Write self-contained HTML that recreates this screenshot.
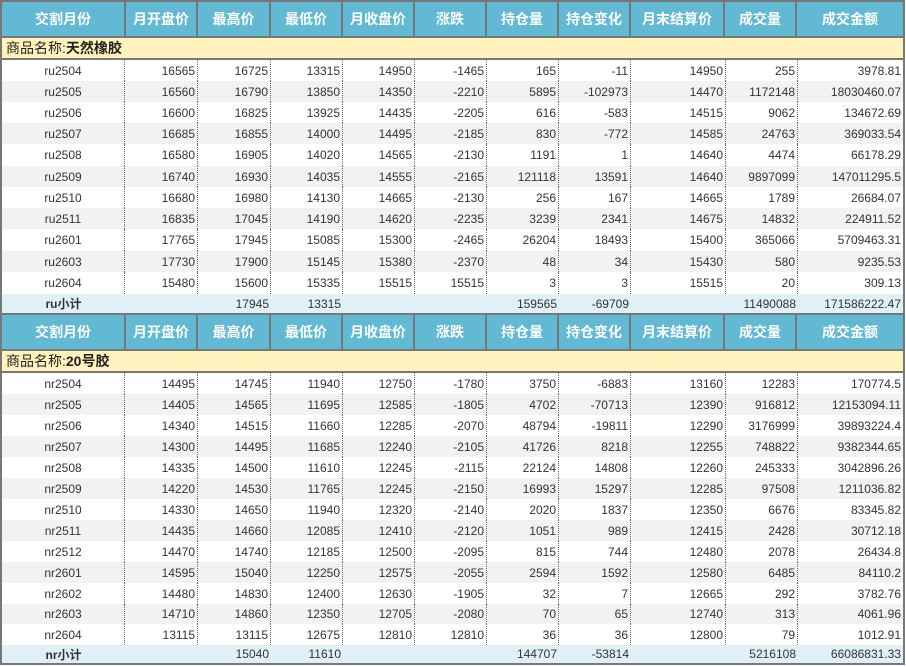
<!DOCTYPE html>
<html><head><meta charset="utf-8"><style>
*{margin:0;padding:0;box-sizing:border-box}
body{width:906px;height:667px;background:#fff;font-family:"Liberation Sans","Noto Sans CJK SC",sans-serif;position:relative;overflow:hidden;color:#333}
.hd{position:absolute;left:0;width:905px;background:#62b9d3;border:2px solid #777;display:flex}
.hd div{color:#fff;font-weight:bold;font-size:14px;display:flex;align-items:center;justify-content:center;border-right:2px solid #777;height:100%}
.hd div:last-child{border-right:none}
.nm{position:absolute;left:0;width:905px;background:#fff2bd;border-left:2px solid #777;border-right:2px solid #777;border-bottom:2px solid #777;font-size:14px;padding-left:4px;display:flex;align-items:center;color:#222}
.r{position:absolute;left:0;width:905px;display:flex;font-size:12px;border-left:2px solid #777;border-right:2px solid #777}
.r div{display:flex;align-items:center;justify-content:flex-end;padding-right:2px;border-right:1px dotted #666;height:100%}
.r div:first-child{justify-content:center;padding:0}
.r div:last-child{border-right:none}
.r.a{background:#f2f2f2}
.r.s{background:#dff0f7}
.r.s div{border-right:none}
.r.s div:first-child{font-weight:bold}
</style></head><body>
<div class="hd" style="top:0;height:38px"><div style="width:124px">交割月份</div><div style="width:72px">月开盘价</div><div style="width:73px">最高价</div><div style="width:72px">最低价</div><div style="width:72px">月收盘价</div><div style="width:72px">涨跌</div><div style="width:72px">持仓量</div><div style="width:72px">持仓变化</div><div style="width:94px">月末结算价</div><div style="width:72px">成交量</div><div style="width:106px">成交金额</div></div>
<div class="nm" style="top:38px;height:22px">商品名称:<b>天然橡胶</b></div>

<div class="r" style="top:60px;height:21px"><div style="width:123px">ru2504</div><div style="width:73px">16565</div><div style="width:73px">16725</div><div style="width:72px">13315</div><div style="width:72px">14950</div><div style="width:72px">-1465</div><div style="width:72px">165</div><div style="width:72px">-11</div><div style="width:95px">14950</div><div style="width:72px">255</div><div style="width:105px">3978.81</div></div>
<div class="r a" style="top:81px;height:21px"><div style="width:123px">ru2505</div><div style="width:73px">16560</div><div style="width:73px">16790</div><div style="width:72px">13850</div><div style="width:72px">14350</div><div style="width:72px">-2210</div><div style="width:72px">5895</div><div style="width:72px">-102973</div><div style="width:95px">14470</div><div style="width:72px">1172148</div><div style="width:105px">18030460.07</div></div>
<div class="r" style="top:102px;height:21px"><div style="width:123px">ru2506</div><div style="width:73px">16600</div><div style="width:73px">16825</div><div style="width:72px">13925</div><div style="width:72px">14435</div><div style="width:72px">-2205</div><div style="width:72px">616</div><div style="width:72px">-583</div><div style="width:95px">14515</div><div style="width:72px">9062</div><div style="width:105px">134672.69</div></div>
<div class="r a" style="top:123px;height:21px"><div style="width:123px">ru2507</div><div style="width:73px">16685</div><div style="width:73px">16855</div><div style="width:72px">14000</div><div style="width:72px">14495</div><div style="width:72px">-2185</div><div style="width:72px">830</div><div style="width:72px">-772</div><div style="width:95px">14585</div><div style="width:72px">24763</div><div style="width:105px">369033.54</div></div>
<div class="r" style="top:144px;height:22px"><div style="width:123px">ru2508</div><div style="width:73px">16580</div><div style="width:73px">16905</div><div style="width:72px">14020</div><div style="width:72px">14565</div><div style="width:72px">-2130</div><div style="width:72px">1191</div><div style="width:72px">1</div><div style="width:95px">14640</div><div style="width:72px">4474</div><div style="width:105px">66178.29</div></div>
<div class="r a" style="top:166px;height:21px"><div style="width:123px">ru2509</div><div style="width:73px">16740</div><div style="width:73px">16930</div><div style="width:72px">14035</div><div style="width:72px">14555</div><div style="width:72px">-2165</div><div style="width:72px">121118</div><div style="width:72px">13591</div><div style="width:95px">14640</div><div style="width:72px">9897099</div><div style="width:105px">147011295.5</div></div>
<div class="r" style="top:187px;height:21px"><div style="width:123px">ru2510</div><div style="width:73px">16680</div><div style="width:73px">16980</div><div style="width:72px">14130</div><div style="width:72px">14665</div><div style="width:72px">-2130</div><div style="width:72px">256</div><div style="width:72px">167</div><div style="width:95px">14665</div><div style="width:72px">1789</div><div style="width:105px">26684.07</div></div>
<div class="r a" style="top:208px;height:21px"><div style="width:123px">ru2511</div><div style="width:73px">16835</div><div style="width:73px">17045</div><div style="width:72px">14190</div><div style="width:72px">14620</div><div style="width:72px">-2235</div><div style="width:72px">3239</div><div style="width:72px">2341</div><div style="width:95px">14675</div><div style="width:72px">14832</div><div style="width:105px">224911.52</div></div>
<div class="r" style="top:229px;height:22px"><div style="width:123px">ru2601</div><div style="width:73px">17765</div><div style="width:73px">17945</div><div style="width:72px">15085</div><div style="width:72px">15300</div><div style="width:72px">-2465</div><div style="width:72px">26204</div><div style="width:72px">18493</div><div style="width:95px">15400</div><div style="width:72px">365066</div><div style="width:105px">5709463.31</div></div>
<div class="r a" style="top:251px;height:21px"><div style="width:123px">ru2603</div><div style="width:73px">17730</div><div style="width:73px">17900</div><div style="width:72px">15145</div><div style="width:72px">15380</div><div style="width:72px">-2370</div><div style="width:72px">48</div><div style="width:72px">34</div><div style="width:95px">15430</div><div style="width:72px">580</div><div style="width:105px">9235.53</div></div>
<div class="r" style="top:272px;height:22px"><div style="width:123px">ru2604</div><div style="width:73px">15480</div><div style="width:73px">15600</div><div style="width:72px">15335</div><div style="width:72px">15515</div><div style="width:72px">15515</div><div style="width:72px">3</div><div style="width:72px">3</div><div style="width:95px">15515</div><div style="width:72px">20</div><div style="width:105px">309.13</div></div>
<div class="r s" style="top:294px;height:19px"><div style="width:123px">ru小计</div><div style="width:73px"></div><div style="width:73px">17945</div><div style="width:72px">13315</div><div style="width:72px"></div><div style="width:72px"></div><div style="width:72px">159565</div><div style="width:72px">-69709</div><div style="width:95px"></div><div style="width:72px">11490088</div><div style="width:105px">171586222.47</div></div>

<div class="hd" style="top:313px;height:38px"><div style="width:124px">交割月份</div><div style="width:72px">月开盘价</div><div style="width:73px">最高价</div><div style="width:72px">最低价</div><div style="width:72px">月收盘价</div><div style="width:72px">涨跌</div><div style="width:72px">持仓量</div><div style="width:72px">持仓变化</div><div style="width:94px">月末结算价</div><div style="width:72px">成交量</div><div style="width:106px">成交金额</div></div>
<div class="nm" style="top:351px;height:22px">商品名称:<b>20号胶</b></div>

<div class="r" style="top:373px;height:21px"><div style="width:123px">nr2504</div><div style="width:73px">14495</div><div style="width:73px">14745</div><div style="width:72px">11940</div><div style="width:72px">12750</div><div style="width:72px">-1780</div><div style="width:72px">3750</div><div style="width:72px">-6883</div><div style="width:95px">13160</div><div style="width:72px">12283</div><div style="width:105px">170774.5</div></div>
<div class="r a" style="top:394px;height:21px"><div style="width:123px">nr2505</div><div style="width:73px">14405</div><div style="width:73px">14565</div><div style="width:72px">11695</div><div style="width:72px">12585</div><div style="width:72px">-1805</div><div style="width:72px">4702</div><div style="width:72px">-70713</div><div style="width:95px">12390</div><div style="width:72px">916812</div><div style="width:105px">12153094.11</div></div>
<div class="r" style="top:415px;height:21px"><div style="width:123px">nr2506</div><div style="width:73px">14340</div><div style="width:73px">14515</div><div style="width:72px">11660</div><div style="width:72px">12285</div><div style="width:72px">-2070</div><div style="width:72px">48794</div><div style="width:72px">-19811</div><div style="width:95px">12290</div><div style="width:72px">3176999</div><div style="width:105px">39893224.4</div></div>
<div class="r a" style="top:436px;height:21px"><div style="width:123px">nr2507</div><div style="width:73px">14300</div><div style="width:73px">14495</div><div style="width:72px">11685</div><div style="width:72px">12240</div><div style="width:72px">-2105</div><div style="width:72px">41726</div><div style="width:72px">8218</div><div style="width:95px">12255</div><div style="width:72px">748822</div><div style="width:105px">9382344.65</div></div>
<div class="r" style="top:457px;height:21px"><div style="width:123px">nr2508</div><div style="width:73px">14335</div><div style="width:73px">14500</div><div style="width:72px">11610</div><div style="width:72px">12245</div><div style="width:72px">-2115</div><div style="width:72px">22124</div><div style="width:72px">14808</div><div style="width:95px">12260</div><div style="width:72px">245333</div><div style="width:105px">3042896.26</div></div>
<div class="r a" style="top:478px;height:21px"><div style="width:123px">nr2509</div><div style="width:73px">14220</div><div style="width:73px">14530</div><div style="width:72px">11765</div><div style="width:72px">12245</div><div style="width:72px">-2150</div><div style="width:72px">16993</div><div style="width:72px">15297</div><div style="width:95px">12285</div><div style="width:72px">97508</div><div style="width:105px">1211036.82</div></div>
<div class="r" style="top:499px;height:21px"><div style="width:123px">nr2510</div><div style="width:73px">14330</div><div style="width:73px">14650</div><div style="width:72px">11940</div><div style="width:72px">12320</div><div style="width:72px">-2140</div><div style="width:72px">2020</div><div style="width:72px">1837</div><div style="width:95px">12350</div><div style="width:72px">6676</div><div style="width:105px">83345.82</div></div>
<div class="r a" style="top:520px;height:21px"><div style="width:123px">nr2511</div><div style="width:73px">14435</div><div style="width:73px">14660</div><div style="width:72px">12085</div><div style="width:72px">12410</div><div style="width:72px">-2120</div><div style="width:72px">1051</div><div style="width:72px">989</div><div style="width:95px">12415</div><div style="width:72px">2428</div><div style="width:105px">30712.18</div></div>
<div class="r" style="top:541px;height:21px"><div style="width:123px">nr2512</div><div style="width:73px">14470</div><div style="width:73px">14740</div><div style="width:72px">12185</div><div style="width:72px">12500</div><div style="width:72px">-2095</div><div style="width:72px">815</div><div style="width:72px">744</div><div style="width:95px">12480</div><div style="width:72px">2078</div><div style="width:105px">26434.8</div></div>
<div class="r a" style="top:562px;height:21px"><div style="width:123px">nr2601</div><div style="width:73px">14595</div><div style="width:73px">15040</div><div style="width:72px">12250</div><div style="width:72px">12575</div><div style="width:72px">-2055</div><div style="width:72px">2594</div><div style="width:72px">1592</div><div style="width:95px">12580</div><div style="width:72px">6485</div><div style="width:105px">84110.2</div></div>
<div class="r" style="top:583px;height:21px"><div style="width:123px">nr2602</div><div style="width:73px">14480</div><div style="width:73px">14830</div><div style="width:72px">12400</div><div style="width:72px">12630</div><div style="width:72px">-1905</div><div style="width:72px">32</div><div style="width:72px">7</div><div style="width:95px">12665</div><div style="width:72px">292</div><div style="width:105px">3782.76</div></div>
<div class="r a" style="top:604px;height:20px"><div style="width:123px">nr2603</div><div style="width:73px">14710</div><div style="width:73px">14860</div><div style="width:72px">12350</div><div style="width:72px">12705</div><div style="width:72px">-2080</div><div style="width:72px">70</div><div style="width:72px">65</div><div style="width:95px">12740</div><div style="width:72px">313</div><div style="width:105px">4061.96</div></div>
<div class="r" style="top:624px;height:21px"><div style="width:123px">nr2604</div><div style="width:73px">13115</div><div style="width:73px">13115</div><div style="width:72px">12675</div><div style="width:72px">12810</div><div style="width:72px">12810</div><div style="width:72px">36</div><div style="width:72px">36</div><div style="width:95px">12800</div><div style="width:72px">79</div><div style="width:105px">1012.91</div></div>
<div class="r s" style="top:645px;height:20px;border-bottom:2px solid #777"><div style="width:123px">nr小计</div><div style="width:73px"></div><div style="width:73px">15040</div><div style="width:72px">11610</div><div style="width:72px"></div><div style="width:72px"></div><div style="width:72px">144707</div><div style="width:72px">-53814</div><div style="width:95px"></div><div style="width:72px">5216108</div><div style="width:105px">66086831.33</div></div>
</body></html>
